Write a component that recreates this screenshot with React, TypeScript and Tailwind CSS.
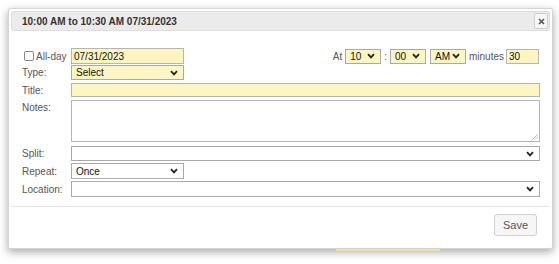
import React from 'react'

const font = { fontFamily: '"Liberation Sans", Arial, sans-serif' }

function Chevron() {
  return (
    <svg
      width="8"
      height="6"
      viewBox="0 0 8 6"
      className="pointer-events-none absolute right-[5px] top-1/2 -translate-y-1/2"
    >
      <path d="M1 1.2 L4 4.4 L7 1.2" fill="none" stroke="#222" strokeWidth="1.8" />
    </svg>
  )
}

function Select({ value, className, yellow }: { value: string; className: string; yellow?: boolean }) {
  return (
    <div
      className={[
        'relative flex items-center border border-[#a9a9a9] pl-[4px] text-[10px] text-[#111]',
        yellow ? 'bg-[#fdf6c3]' : 'bg-white',
        className,
      ].join(' ')}
    >
      <span>{value}</span>
      <Chevron />
    </div>
  )
}

function Label({ children }: { children: React.ReactNode }) {
  return <div className="w-[49px] shrink-0 text-[10px] text-[#555]">{children}</div>
}

export default function App() {
  return (
    <div className="h-[264px] w-[559px] bg-white pl-[8px] pt-[8px]" style={font}>
      <div className="relative flex h-[241px] w-[545px] flex-col rounded-[2px] border border-[#d4d4d4] bg-white p-[2px] shadow-[0_3px_8px_rgba(0,0,0,0.35)]">
        <div className="flex h-[20px] items-center justify-between rounded-[2px] border border-[#dedede] bg-[#ebebeb] pl-[10px] pr-[1px]">
          <span className="text-[10px] font-bold text-[#333]">10:00 AM to 10:30 AM 07/31/2023</span>
          <div className="flex h-[16px] w-[14px] items-center justify-center rounded-[2px] border border-[#d0d0d0] bg-[#f7f7f7]">
            <svg width="7" height="7" viewBox="0 0 7 7">
              <path d="M1 1 L6 6 M6 1 L1 6" stroke="#555" strokeWidth="1.6" />
            </svg>
          </div>
        </div>

        <div className="flex flex-col pl-[11px] pr-[10px] pt-[17px]">
          <div className="flex h-[16px] items-center">
            <div className="flex w-[49px] shrink-0 items-center">
              <span className="mr-[2px] ml-[2px] h-[10px] w-[10px] rounded-[2px] border border-[#888] bg-white" />
              <span className="text-[10px] text-[#555]">All-day</span>
            </div>
            <div className="flex h-[16px] w-[113px] items-center border border-[#b5b5b5] bg-[#fdf6c3] pl-[2px] text-[10px] text-[#111]">
              07/31/2023
            </div>
            <div className="ml-auto flex items-center pr-[1px] text-[10px] text-[#555]">
              <span className="mr-[3px]">At</span>
              <Select value="10" yellow className="h-[15px] w-[36px]" />
              <span className="mx-[3px]">:</span>
              <Select value="00" yellow className="h-[15px] w-[36px]" />
              <Select value="AM" yellow className="ml-[4px] h-[15px] w-[36px]" />
              <span className="ml-[3px] mr-[2px]">minutes</span>
              <div className="flex h-[15px] w-[33px] items-center border border-[#b5b5b5] bg-[#fdf6c3] pl-[2px] text-[#111]">
                30
              </div>
            </div>
          </div>

          <div className="mt-[1px] flex h-[15px] items-center">
            <Label>Type:</Label>
            <Select value="Select" yellow className="h-[15px] w-[113px]" />
          </div>

          <div className="mt-[3px] flex h-[14px] items-center">
            <Label>Title:</Label>
            <div className="h-[14px] flex-1 border border-[#b5b5b5] bg-[#fdf6c3]" />
          </div>

          <div className="mt-[3px] flex h-[42px] items-start">
            <Label>Notes:</Label>
            <div className="relative h-[42px] flex-1 border border-[#b5b5b5] bg-white">
              <svg width="6" height="6" viewBox="0 0 6 6" className="absolute bottom-[1px] right-[1px]">
                <path d="M5.5 0.5 L0.5 5.5 M5.5 3 L3 5.5" stroke="#aaa" strokeWidth="0.8" />
              </svg>
            </div>
          </div>

          <div className="mt-[4px] flex h-[15px] items-center">
            <Label>Split:</Label>
            <Select value="" className="h-[15px] flex-1" />
          </div>

          <div className="mt-[2px] flex h-[16px] items-center">
            <Label>Repeat:</Label>
            <Select value="Once" className="h-[16px] w-[113px]" />
          </div>

          <div className="mt-[2px] flex h-[16px] items-center">
            <Label>Location:</Label>
            <Select value="" className="h-[16px] flex-1" />
          </div>
        </div>

        <div className="mt-[9px] h-[1px] bg-[#e6e6e6]" />

        <div className="flex justify-end pr-[13px] pt-[7px]">
          <div className="flex h-[22px] w-[43px] items-center justify-center rounded-[3px] border border-[#cfcfcf] bg-[#f6f6f6] text-[11px] text-[#555]">
            Save
          </div>
        </div>

        <div className="absolute bottom-[-3px] left-[327px] h-[2px] w-[104px] bg-[#ece59a]" />
      </div>
    </div>
  )
}
